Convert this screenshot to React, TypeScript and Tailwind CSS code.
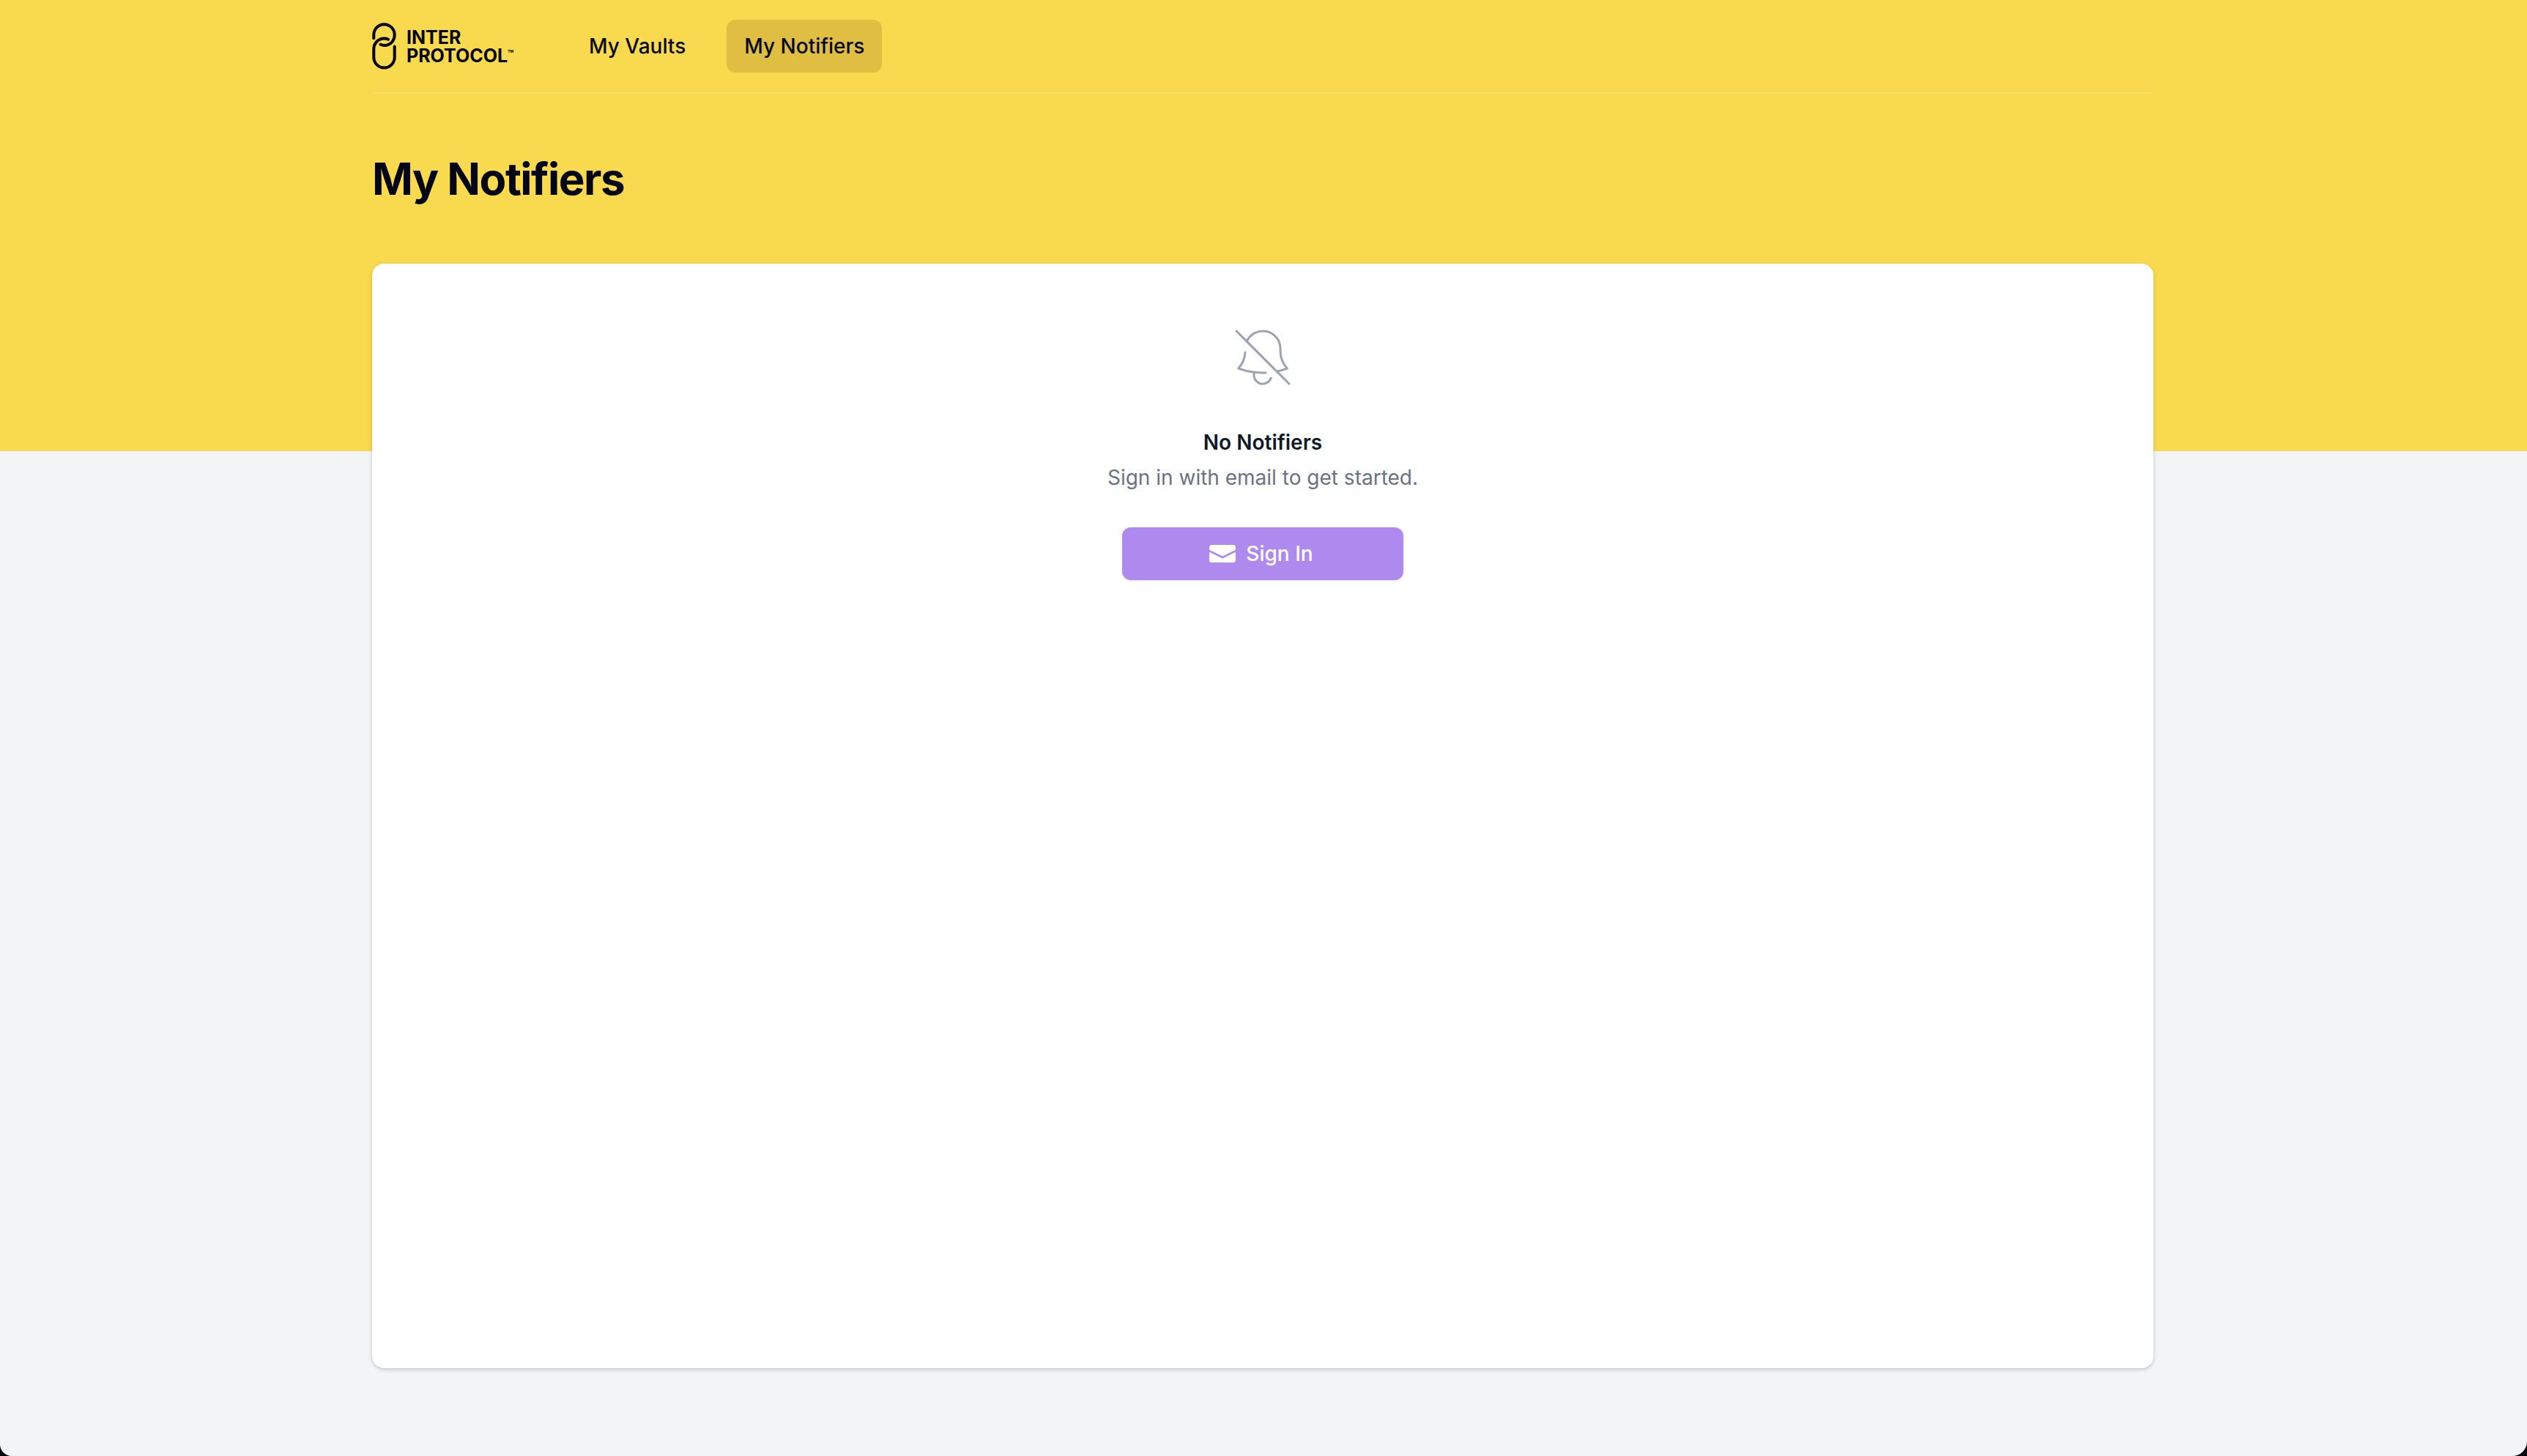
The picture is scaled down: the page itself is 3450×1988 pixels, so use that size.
import React from "react";

function Logo() {
  return (
    <a href="#" aria-label="Inter Protocol" className="flex w-48 items-center gap-3.5 text-black">
      <svg viewBox="0 0 33 64" fill="none" stroke="currentColor" strokeWidth="4" strokeLinecap="round" aria-hidden="true" className="h-16 w-[33px] shrink-0">
        <path d="M2.3 21.200V16.500a14.200 14.200 0 0 1 28.400 0c0 8.300-6 14.400-13.700 14.400-2.200 0-4.100-.4-5.500-1.100" />
        <path d="M22 22.800c-1.500-.8-3.300-1.200-5.300-1.200C8.500 21.600 2.300 27.800 2.300 36v11.300a14.200 14.200 0 0 0 28.400 0V32.500" />
      </svg>
      <span className="flex flex-col pt-0.5 text-[25px] leading-[25px] font-bold">
        <span>INTER</span>
        <span className="flex items-start">
          PROTOCOL<span className="text-[5px] leading-3">TM</span>
        </span>
      </span>
    </a>
  );
}

function BellSlashIcon() {
  return (
    <svg viewBox="0 0 24 24" fill="none" stroke="currentColor" strokeWidth="0.75" strokeLinecap="round" strokeLinejoin="round" aria-hidden="true" className="size-24 text-[#9ca3af]">
      <path d="M9.143 17.082a24.248 24.248 0 003.844.148m-3.844-.148a23.856 23.856 0 01-5.455-1.31 8.964 8.964 0 002.3-5.542m3.155 6.852a3 3 0 005.667 1.97m1.965-2.277L21 21m-4.225-4.225a23.81 23.81 0 003.536-1.003A8.967 8.967 0 0118 9.75V9A6 6 0 006.53 6.53m10.245 10.245L6.53 6.53M3 3l3.53 3.53" />
    </svg>
  );
}

function EnvelopeIcon() {
  return (
    <svg viewBox="0 0 36 24" fill="currentColor" aria-hidden="true" className="h-6 w-9">
      <path d="M0 6.700V3.500A3.500 3.500 0 0 1 3.500 0h29A3.500 3.500 0 0 1 36 3.500v3.200L18 15.500z" />
      <path d="M0 9.800l18 8.700 18-8.700V20.500a3.500 3.500 0 0 1-3.500 3.500h-29A3.500 3.500 0 0 1 0 20.500z" />
    </svg>
  );
}

export default function App() {
  return (
    <div className="min-h-screen bg-black font-['Inter',sans-serif]">
      <div className="flex min-h-screen flex-col overflow-hidden rounded-br-[20px] rounded-bl-2xl bg-[#f3f4f6]">
        <header className="bg-[#f9da4e] pr-0.5 pb-64">
          <div className="mx-auto max-w-[2560px] px-16">
            <div className="flex h-32 items-center border-b-2 border-[#fadd61]">
              <Logo />
              <nav className="ml-20 flex gap-8 text-[28px] leading-10 font-medium text-[#030617]">
                <a href="#vaults" className="rounded-xl px-6 py-4">My Vaults</a>
                <a href="#notifiers" aria-current="page" className="rounded-xl bg-[#e0be42] px-6 py-4">My Notifiers</a>
              </nav>
            </div>
            <h1 className="py-20 text-[60px] leading-[72px] font-bold tracking-tight text-[#030617]">My Notifiers</h1>
          </div>
        </header>
        <main className="-mt-64 flex flex-1 flex-col pr-0.5 pb-[120px]">
          <div className="mx-auto flex w-full max-w-[2560px] flex-1 flex-col px-16">
            <section className="flex flex-1 flex-col items-center rounded-2xl bg-white p-20 text-[28px] leading-10 shadow-[0_2px_6px_rgba(0,0,0,0.1),0_2px_4px_rgba(0,0,0,0.1)]">
              <BellSlashIcon />
              <h2 className="mt-12 font-semibold text-[#111827]">No Notifiers</h2>
              <p className="mt-2 text-[#6b7280]">Sign in with email to get started.</p>
              <button type="button" className="mt-12 flex w-96 items-center justify-center gap-3.5 rounded-xl bg-[#af8aee] py-4 pr-1 font-medium text-white shadow-sm">
                <EnvelopeIcon />
                Sign In
              </button>
            </section>
          </div>
        </main>
      </div>
    </div>
  );
}
